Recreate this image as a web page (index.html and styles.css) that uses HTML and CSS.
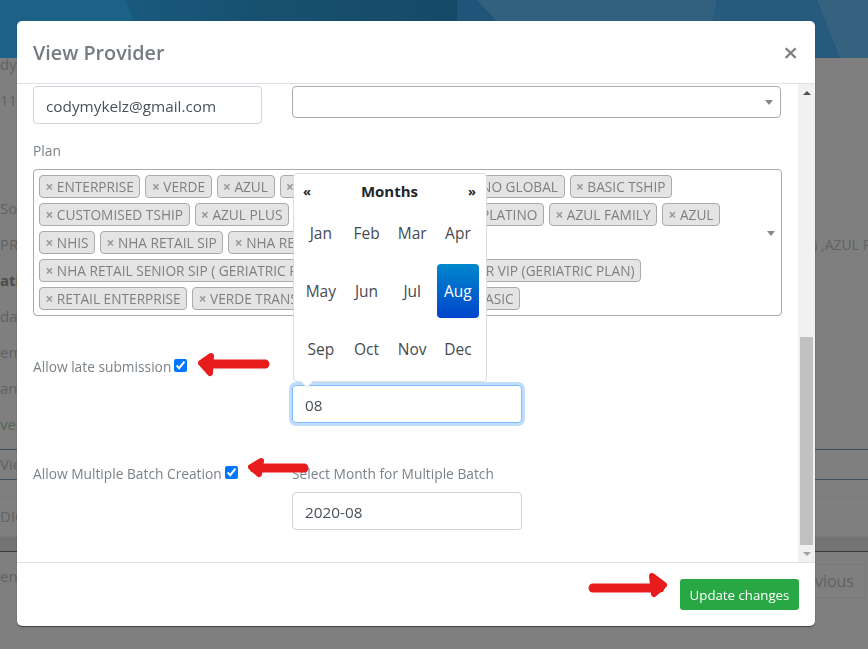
FILE: index.html
```html
<!DOCTYPE html>
<html lang="en">

<head>
  <meta charset="UTF-8">
  <meta name="viewport" content="width=device-width, initial-scale=1.0">
  <title>View Provider</title>
  <link rel="stylesheet" href="styles.css">
</head>

<body>

  <!-- page behind the modal, only the edges show -->
  <div class="page">
    <div class="hero">
      <svg class="hero-art" viewBox="0 0 868 58" preserveAspectRatio="none">
        <defs>
          <linearGradient id="heroLeft" x1="0" x2="1" y1="0" y2="0">
            <stop offset="0" stop-color="#1b6289" />
            <stop offset=".3" stop-color="#17506f" />
            <stop offset="1" stop-color="#123f5a" />
          </linearGradient>
        </defs>
        <rect width="868" height="58" fill="url(#heroLeft)" />
        <polygon points="0,0 125,0 150,58 0,58" fill="#1c6188" />
        <polygon points="457,0 868,0 868,58 457,58" fill="#205579" />
        <polygon points="477,0 717,0 705,58 530,58" fill="#32617f" />
        <polygon points="717,0 817,0 840,58 705,58" fill="#265b7d" />
        <polygon points="817,0 868,0 868,58 840,58" fill="#35627f" />
      </svg>
    </div>
    <div class="info-row">dy</div>
    <div class="info-row">111</div>
    <div class="info-row"></div>
    <div class="info-row"></div>
    <div class="info-row">So</div>
    <div class="info-row">PR<span class="info-far">) ,AZUL PLUS</span></div>
    <div class="info-row info-strong">ati</div>
    <div class="info-row">dar</div>
    <div class="info-row">em</div>
    <div class="info-row">ank</div>
    <div class="info-row info-green">ved</div>
    <div class="view-row">Vie</div>
    <div class="table-row">DIC</div>
    <div class="table-band"></div>
    <div class="pager-row">
      <span class="pager-info">ent</span>
      <span class="pager-btn">Previous</span>
    </div>
  </div>

  <div class="backdrop"></div>

  <div class="modal">
    <div class="modal-header">
      <h5 class="modal-title">View Provider</h5>
      <span class="modal-close">&times;</span>
    </div>

    <div class="modal-body">
      <div class="modal-scroll">
        <div class="form-row">
          <input class="form-control" type="text" value="codymykelz@gmail.com">
          <div class="select-single"><span class="select-arrow"></span></div>
        </div>

        <label class="plan-label">Plan</label>
        <div class="select-multi">
          <div class="tag-row">
            <span class="tag"><b>&times;</b>ENTERPRISE</span>
            <span class="tag"><b>&times;</b>VERDE</span>
            <span class="tag"><b>&times;</b>AZUL</span>
            <span class="tag tag-wide w-global"><b>&times;</b><span>PLATINO GLOBAL</span></span>
            <span class="tag"><b>&times;</b>BASIC TSHIP</span>
          </div>
          <div class="tag-row">
            <span class="tag"><b>&times;</b>CUSTOMISED TSHIP</span>
            <span class="tag"><b>&times;</b>AZUL PLUS</span>
            <span class="tag tag-wide w-platino"><b>&times;</b><span>PLATINO</span></span>
            <span class="tag"><b>&times;</b>AZUL FAMILY</span>
            <span class="tag"><b>&times;</b>AZUL</span>
          </div>
          <div class="tag-row">
            <span class="tag"><b>&times;</b>NHIS</span>
            <span class="tag"><b>&times;</b>NHA RETAIL SIP</span>
            <span class="tag"><b>&times;</b>NHA RETAIL</span>
          </div>
          <div class="tag-row">
            <span class="tag w-senior"><b>&times;</b>NHA RETAIL SENIOR SIP ( GERIATRIC PLAN)</span>
            <span class="tag tag-wide w-vip"><b>&times;</b><span>NHA RETAIL SENIOR VIP (GERIATRIC PLAN)</span></span>
          </div>
          <div class="tag-row">
            <span class="tag"><b>&times;</b>RETAIL ENTERPRISE</span>
            <span class="tag w-trans"><b>&times;</b>VERDE TRANSITION</span>
            <span class="tag tag-wide w-basic"><b>&times;</b><span>BASIC</span></span>
          </div>
          <span class="select-arrow"></span>
        </div>

        <div class="form-row batch-row">
          <div class="check-line">
            <label>Allow late submission</label>
            <input type="checkbox" checked>
          </div>
          <div class="month-field">
            <label class="covered">Select Month</label>
            <div class="month-input">
              <div class="datepicker">
                <div class="dp-head">
                  <span class="dp-nav">&laquo;</span>
                  <span class="dp-title">Months</span>
                  <span class="dp-nav">&raquo;</span>
                </div>
                <div class="dp-months">
                  <span>Jan</span><span>Feb</span><span>Mar</span><span>Apr</span>
                  <span>May</span><span>Jun</span><span>Jul</span><span class="active">Aug</span>
                  <span>Sep</span><span>Oct</span><span>Nov</span><span>Dec</span>
                </div>
              </div>
              <input class="form-control focused" type="text" value="08">
            </div>
          </div>
        </div>

        <div class="form-row multi-batch-row">
          <div class="check-line">
            <label>Allow Multiple Batch Creation</label>
            <input type="checkbox" checked>
          </div>
          <div class="month-field">
            <label>Select Month for Multiple Batch</label>
            <input class="form-control" type="text" value="2020-08">
          </div>
        </div>
      </div>

      <div class="scrollbar">
        <span class="sb-btn"><i class="sb-up"></i></span>
        <div class="sb-track"><div class="sb-thumb"></div></div>
        <span class="sb-btn"><i class="sb-down"></i></span>
      </div>
    </div>

    <div class="modal-footer">
      <button class="btn-update">Update changes</button>
    </div>
  </div>

  <!-- red arrows someone drew on top of the screenshot -->
  <svg class="arrows" viewBox="0 0 868 649">
    <g fill="#e81c1c" stroke="#e81c1c" stroke-linecap="round" stroke-linejoin="round">
      <path d="M265 364 H206" fill="none" stroke-width="9" />
      <path d="M211 356 L201 363 L210 373 Z" stroke-width="6" />
      <path d="M304 468 H254" fill="none" stroke-width="9" />
      <path d="M261 461 L251 467 L259 474 Z" stroke-width="6" />
      <path d="M593 588 H660" fill="none" stroke-width="9" />
      <path d="M652 576 L664 585 L654 594 Z" stroke-width="6" />
    </g>
  </svg>

</body>

</html>
```
FILE: styles.css
```css
* {
  box-sizing: border-box;
}

html,
body {
  height: 100%;
}

body {
  margin: 0;
  overflow: hidden;
  background: #fff;
  color: #666;
  font-family: "Open Sans", "Noto Sans", sans-serif;
  font-size: 13.75px;
}

/* page behind */
.page {
  height: 649px;
  overflow: hidden;
}

.hero {
  position: relative;
  z-index: 1;
  height: 58px;
}

.hero-art {
  display: block;
  width: 100%;
  height: 100%;
}

.info-row {
  height: 36px;
  line-height: 12px;
  white-space: nowrap;
  color: #c4c4c4;
  font-size: 15px;
}

.info-far {
  margin-left: 795px;
  font-size: 14px;
}

.info-strong {
  font-weight: 700;
  color: #999;
}

.info-green {
  color: #a9ccb4;
}

.view-row {
  height: 31px;
  margin-top: -5px;
  border-top: 1px solid #6fa8bb;
  border-bottom: 1px solid #6fa8bb;
  line-height: 29px;
  font-size: 15px;
  color: #c4c4c4;
}

.table-row {
  height: 40px;
  margin-top: 17px;
  border-top: 1px solid #f2f2f2;
  border-bottom: 1px solid #f2f2f2;
  line-height: 37px;
  font-size: 15px;
  color: #c4c4c4;
}

.table-band {
  height: 15px;
  border-bottom: 1px solid #777;
  background: #e6e6e6;
}

.pager-row {
  display: flex;
  justify-content: space-between;
  align-items: flex-start;
  height: 47px;
  font-size: 15px;
  color: #c4c4c4;
}

.pager-info {
  margin-top: 14px;
  line-height: 20px;
}

.pager-btn {
  width: 110px;
  height: 34px;
  margin: 12px 2px 0 0;
  padding-right: 11px;
  border: 1px solid #f0f0f0;
  font-size: 16px;
  line-height: 32px;
  text-align: right;
  color: #c4c4c4;
}

.backdrop {
  position: fixed;
  inset: 0;
  background: rgba(0, 0, 0, .5);
}

/* modal */
.modal {
  position: fixed;
  z-index: 2;
  top: 21px;
  left: 17px;
  display: flex;
  flex-direction: column;
  width: 798px;
  height: 605px;
  border-radius: 5px;
  background: #fff;
  box-shadow: 0 1px 1px rgba(0, 0, 0, .5);
  overflow: hidden;
}

.modal-header {
  display: flex;
  align-items: center;
  justify-content: space-between;
  height: 63px;
  padding: 1px 16px 0;
  border-bottom: 1px solid #dee2e6;
}

.modal-title {
  margin: 0;
  color: #757b80;
  font-size: 19.75px;
  font-weight: 600;
}

.modal-close {
  margin: -2px 1px 0 0;
  color: #808080;
  font-size: 26px;
  font-weight: 600;
  line-height: 1;
}

.modal-body {
  display: flex;
  flex: 1;
  min-height: 0;
}

.modal-scroll {
  flex: 1;
  padding: 2px 16px 0;
}

.form-row {
  display: grid;
  grid-template-columns: 229px 489px;
  column-gap: 30px;
  align-items: start;
}

.form-control {
  display: block;
  width: 229px;
  height: 38px;
  padding: 1px 12px 0;
  border: 1px solid #ced4da;
  border-radius: 4px;
  outline: 0;
  background: #fff;
  color: #495057;
  font-family: inherit;
  font-size: 15.3px;
}

.month-field .form-control {
  width: 230px;
}

.form-control.focused {
  border-color: #80bdff;
  box-shadow: 0 0 0 3px rgba(0, 123, 255, .25);
}

.select-single {
  position: relative;
  height: 32px;
  border: 1px solid #aaa;
  border-radius: 4px;
}

.select-arrow {
  position: absolute;
  top: 13px;
  right: 7px;
  border-top: 5px solid #888;
  border-left: 4px solid transparent;
  border-right: 4px solid transparent;
}

.plan-label {
  display: block;
  margin: 18px 0 9px;
  line-height: 18px;
  color: #7b8288;
}

.select-multi {
  position: relative;
  display: flex;
  flex-direction: column;
  gap: 5px;
  width: 749px;
  height: 147px;
  padding: 5px;
  border: 1px solid #aaa;
  border-radius: 4px;
}

.select-multi .select-arrow {
  top: 61px;
  right: 6px;
}

.tag-row {
  display: flex;
  gap: 5px;
  white-space: nowrap;
}

.tag {
  flex: none;
  height: 23px;
  padding: 0 5.5px;
  border: 1px solid #aaa;
  border-radius: 4px;
  background: #e4e4e4;
  color: #808080;
  font-size: 13.7px;
  line-height: 21px;
  overflow: hidden;
}

.tag b {
  margin-right: 3.5px;
  color: #999;
}

/* these run under the month picker, only their ends show */
.tag-wide {
  display: flex;
  justify-content: space-between;
}

.w-global {
  width: 285px;
}

.w-platino {
  width: 250px;
}

.w-senior {
  width: 296px;
}

.w-vip {
  width: 301px;
}

.w-trans {
  width: 253px;
}

.w-basic {
  width: 70px;
}

.batch-row {
  margin-top: 42px;
}

.multi-batch-row {
  margin-top: 42px;
}

.check-line {
  display: flex;
  align-items: center;
  gap: 3px;
  white-space: nowrap;
  color: #7b8288;
}

.check-line label {
  line-height: 18px;
}

.check-line input {
  width: 13px;
  height: 13px;
  margin: 0 0 3px;
}

.month-field label {
  display: block;
  margin-bottom: 9px;
  line-height: 18px;
  color: #7b8288;
}

.month-field .covered {
  padding-left: 4px;
}

.month-input {
  position: relative;
  width: 230px;
}

/* month picker */
.datepicker {
  position: absolute;
  z-index: 1;
  bottom: 100%;
  left: 1px;
  width: 194px;
  height: 209px;
  margin-bottom: 3px;
  padding: 4px 4px 0;
  border: 1px solid #ddd;
  border-radius: 4px;
  background: #fff;
  color: #444a50;
}

.datepicker::before,
.datepicker::after {
  content: "";
  position: absolute;
  left: 6px;
  top: 100%;
  border-top: 7px solid #ddd;
  border-left: 7px solid transparent;
  border-right: 7px solid transparent;
}

.datepicker::after {
  left: 7px;
  border-top: 6px solid #fff;
  border-left-width: 6px;
  border-right-width: 6px;
}

.dp-head {
  display: flex;
  align-items: center;
  justify-content: space-between;
  height: 26px;
  padding: 0 6px 0 5px;
  color: #212529;
}

.dp-title {
  font-size: 15px;
  font-weight: 700;
}

.dp-nav {
  font-size: 13px;
  font-weight: 700;
}

.dp-months {
  display: grid;
  grid-template-columns: repeat(4, 45.7px);
  grid-auto-rows: 54px;
  row-gap: 4px;
  margin-top: 2px;
}

.dp-months span {
  display: flex;
  align-items: center;
  justify-content: center;
  margin: 0 2px;
  border-radius: 4px;
  font-size: 15.5px;
}

.dp-months .active {
  background: linear-gradient(#0088cc, #0044cc);
  color: #fff;
}

/* scrollbar */
.scrollbar {
  display: flex;
  flex-direction: column;
  width: 17px;
  background: #f1f1f1;
}

.sb-btn {
  display: flex;
  align-items: center;
  justify-content: center;
  height: 17px;
}

.sb-up {
  border-bottom: 4px solid #505050;
  border-left: 4px solid transparent;
  border-right: 4px solid transparent;
}

.sb-down {
  border-top: 4px solid #a3a3a3;
  border-left: 4px solid transparent;
  border-right: 4px solid transparent;
}

.sb-track {
  display: flex;
  flex: 1;
  flex-direction: column;
  justify-content: flex-end;
  padding: 0 2px;
}

.sb-thumb {
  height: 208px;
  background: #c1c1c1;
}

/* footer */
.modal-footer {
  display: flex;
  justify-content: flex-end;
  align-items: flex-start;
  height: 64px;
  padding: 16px 16px 0;
  border-top: 1px solid #dee2e6;
}

.btn-update {
  width: 119px;
  height: 31px;
  padding: 0;
  border: 0;
  border-radius: 3px;
  background: #28a745;
  color: #fff;
  font-family: inherit;
  font-size: 13.25px;
  font-weight: 500;
}

.arrows {
  position: fixed;
  z-index: 3;
  inset: 0;
  width: 868px;
  height: 649px;
  pointer-events: none;
}
```
